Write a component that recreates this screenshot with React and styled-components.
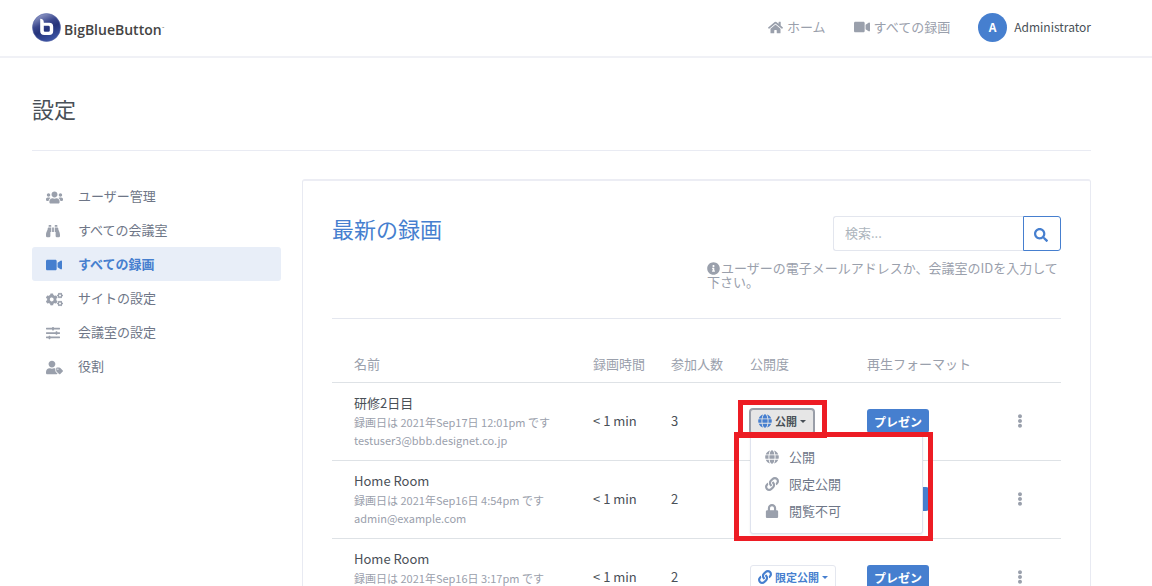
import React from "react";
import styled, { createGlobalStyle } from "styled-components";
import {
  FaHome,
  FaVideo,
  FaUsers,
  FaBinoculars,
  FaCogs,
  FaSlidersH,
  FaUserTag,
  FaInfoCircle,
  FaSearch,
  FaGlobe,
  FaLink,
  FaLock,
  FaEllipsisV,
} from "react-icons/fa";

const GlobalStyle = createGlobalStyle`
  * {
    box-sizing: border-box;
  }
  body {
    margin: 0;
    background-color: #fff;
    color: #495057;
    font-family: "Noto Sans CJK JP", "Noto Sans", sans-serif;
    font-size: 13px;
    line-height: 20px;
  }
  h1, h2, p {
    margin: 0;
    font-weight: 400;
  }
  a {
    color: inherit;
    text-decoration: none;
  }
  button, input {
    font-family: inherit;
    font-size: inherit;
  }
`;

const Header = styled.header`
  display: flex;
  align-items: center;
  justify-content: space-between;
  height: 58px;
  padding: 0 61px 2px 32px;
  border-bottom: 2px solid #f0f1f6;
`;
const Brand = styled.a`
  display: flex;
  align-items: center;
  gap: 3px;
`;
const BrandName = styled.span`
  font-family: "Open Sans", "Noto Sans", sans-serif;
  font-size: 14px;
  font-weight: 600;
  color: #444;
  padding-top: 5px;
`;
const TradeMark = styled.sup`
  font-size: 3px;
  line-height: 1;
`;
const Nav = styled.nav`
  display: flex;
  align-items: center;
`;
const NavLink = styled.a`
  display: flex;
  align-items: center;
  gap: 4px;
  margin-right: 28px;
  color: #9aa0ac;
`;
const UserLink = styled.a`
  display: flex;
  align-items: center;
  gap: 7px;
  font-size: 12px;
`;
const Avatar = styled.span`
  width: 29px;
  height: 29px;
  border-radius: 50%;
  background-color: #467fcf;
  color: #fff;
  font-weight: 700;
  line-height: 28px;
  text-align: center;
`;

const Page = styled.main`
  padding: 0 61px 0 32px;
`;
const PageTitle = styled.h1`
  font-size: 22px;
  line-height: 28px;
  padding: 36px 0 28px;
  border-bottom: 1px solid #e9ebf3;
`;
const Columns = styled.div`
  display: grid;
  grid-template-columns: 249px 1fr;
  gap: 21px;
  align-items: start;
  margin-top: 28px;
`;
const Menu = styled.nav`
  display: flex;
  flex-direction: column;
`;
const MenuLink = styled.a`
  display: flex;
  align-items: center;
  height: 34px;
  padding: 0 14px;
  border-radius: 3px;
  color: ${(props) => (props.$active ? "#467fcf" : "#6e7687")};
  background-color: ${(props) => (props.$active ? "#e8eef8" : "transparent")};
  font-weight: ${(props) => (props.$active ? 700 : 400)};
`;
const MenuIcon = styled.span`
  display: flex;
  width: 32px;
  padding-top: 2px;
  color: ${(props) => (props.$active ? "#467fcf" : "#9aa0ac")};
`;

const Card = styled.section`
  border: 1px solid #e8eaf2;
  border-top: 2px solid #ecedf4;
  border-radius: 3px;
  padding: 35px 29px 0;
`;
const CardHead = styled.div`
  display: flex;
  justify-content: space-between;
  padding-bottom: 29px;
  border-bottom: 1px solid #e4e7ef;
`;
const CardTitle = styled.h2`
  font-size: 22px;
  line-height: 24px;
  color: #467fcf;
`;
const SearchArea = styled.div`
  display: flex;
  flex-direction: column;
  width: 354px;
`;
const SearchForm = styled.form`
  display: flex;
  align-self: flex-end;
  width: 228px;
  height: 35px;
`;
const SearchInput = styled.input`
  flex: 1;
  min-width: 0;
  padding: 0 11px 2px;
  border: 1px solid #e3e6ee;
  border-right: 0;
  border-radius: 3px 0 0 3px;
  color: #495057;

  &::placeholder {
    color: #adb5bd;
  }
`;
const SearchButton = styled.button`
  display: flex;
  align-items: center;
  justify-content: center;
  width: 38px;
  padding: 2px 2px 0 0;
  border: 1px solid #467fcf;
  border-radius: 0 3px 3px 0;
  background-color: #fff;
  color: #467fcf;
  font-size: 14px;
`;
const SearchHint = styled.p`
  margin-top: 10px;
  line-height: 14px;
  color: #9aa0ac;

  svg {
    vertical-align: -2px;
    margin-right: 1px;
  }
`;

const Table = styled.table`
  width: 100%;
  margin-top: 29px;
  border-collapse: collapse;
  table-layout: fixed;
`;
const Th = styled.th`
  width: ${(props) => props.$width};
  height: 34px;
  padding: 0 0 2px ${(props) => (props.$first ? "22px" : "0")};
  border-bottom: 1px solid #dee2e6;
  text-align: left;
  font-weight: 400;
  color: #9aa0ac;
`;
const Td = styled.td`
  height: 78px;
  padding: 0 0 0 ${(props) => (props.$first ? "22px" : "0")};
  border-bottom: 1px solid #dee2e6;
  text-align: left;
  white-space: nowrap;
`;
const RecordingNote = styled.div`
  font-size: 11px;
  line-height: 18px;
  color: #9aa0ac;
`;

const Picker = styled.div`
  position: relative;
  display: flex;
`;
const PickerButton = styled.button`
  display: flex;
  align-items: center;
  gap: 3px;
  height: 25px;
  padding: 0 7px;
  border: 1px solid #e4e7ef;
  border-radius: 3px;
  background-color: #fff;
  color: #467fcf;
  font-size: 11px;
  font-weight: 700;

  svg {
    font-size: 14px;
    color: #467fcf;
  }

  &[aria-expanded="true"] {
    background-color: #e6e6e6;
    border-color: #999ea8;
    box-shadow: 0 0 0 1px #999ea8;
    color: #495057;
  }
`;
const Caret = styled.span`
  border: 3px solid transparent;
  border-top-color: currentColor;
  border-bottom: 0;
`;
const FormatButton = styled.button`
  height: 24px;
  padding: 0 7px;
  border: 0;
  border-radius: 3px;
  background-color: #467fcf;
  color: #fff;
  font-size: 12px;
  font-weight: 700;
`;
const MoreButton = styled.button`
  display: flex;
  padding: 0;
  border: 0;
  background: none;
  color: #9aa0ac;
  font-size: 14px;
`;

const Dropdown = styled.div`
  position: absolute;
  z-index: 1;
  top: 24px;
  left: 0;
  width: 173px;
  padding: 9px 0;
  border: 1px solid #dfe3ee;
  border-radius: 3px;
  background-color: #fff;
  box-shadow: 0 1px 2px rgba(0, 0, 0, 0.08);
`;
const DropdownItem = styled.button`
  display: flex;
  align-items: center;
  width: 100%;
  height: 27px;
  padding: 0 14px;
  border: 0;
  background: none;
  color: #6e7687;
`;
const DropdownIcon = styled.span`
  display: flex;
  width: 24px;
  padding-top: 2px;
  font-size: 14px;
  color: #9aa0ac;
`;
const Highlight = styled.div`
  position: absolute;
  z-index: 2;
  border: 5px solid #ed1c24;
  pointer-events: none;
`;
const ButtonHighlight = styled(Highlight)`
  top: -9px;
  left: -12px;
  width: 89px;
  height: 38px;
`;
const MenuHighlight = styled(Highlight)`
  top: 23px;
  left: -16px;
  width: 199px;
  height: 109px;
`;

const Logo = () => (
  <svg width="29" height="29" viewBox="0 0 29 29" aria-hidden="true">
    <defs>
      <linearGradient id="ball" x1="0.15" y1="0" x2="0.6" y2="1">
        <stop offset="0" stopColor="#a3abd2" />
        <stop offset="0.4" stopColor="#3a478d" />
        <stop offset="0.6" stopColor="#25337a" />
        <stop offset="1" stopColor="#3c55a5" />
      </linearGradient>
    </defs>
    <circle cx="14.5" cy="14.5" r="14" fill="url(#ball)" stroke="#5565a6" strokeWidth="0.6" />
    <path
      d="M8.2 5.8q3.6 0.2 3.6 3.6v0.4h5.4q4 0 4 4v4.2q0 4-4 4h-5q-4 0-4-4z M11.8 12.8v4.8q0 1.2 1.2 1.2h3.4q1.4 0 1.4-1.4v-3.2q0-1.4-1.4-1.4z"
      fill="#fff"
      fillRule="evenodd"
    />
  </svg>
);

const VisibilityPicker = ({ Icon, label, open }) => (
  <Picker>
    <PickerButton type="button" aria-haspopup="menu" aria-expanded={open}>
      <Icon />
      {label}
      <Caret />
    </PickerButton>
    {open && (
      <>
        <Dropdown role="menu">
          {Visibilities.map((item) => (
            <DropdownItem key={item.label} type="button" role="menuitem">
              <DropdownIcon>
                <item.Icon />
              </DropdownIcon>
              {item.label}
            </DropdownItem>
          ))}
        </Dropdown>
        <ButtonHighlight />
        <MenuHighlight />
      </>
    )}
  </Picker>
);

const RecordingRow = ({ name, date, owner, length, users, visibility, open }) => (
  <tr>
    <Td $first>
      <div>{name}</div>
      <RecordingNote>録画日は {date} です</RecordingNote>
      <RecordingNote>{owner}</RecordingNote>
    </Td>
    <Td>{length}</Td>
    <Td>{users}</Td>
    <Td>
      <VisibilityPicker {...visibility} open={open} />
    </Td>
    <Td>
      <FormatButton type="button">プレゼン</FormatButton>
    </Td>
    <Td>
      <MoreButton type="button" aria-haspopup="menu" aria-label="メニュー">
        <FaEllipsisV />
      </MoreButton>
    </Td>
  </tr>
);

const App = () => {
  return (
    <>
      <GlobalStyle />
      <Header>
        <Brand href="#">
          <Logo />
          <BrandName>
            BigBlueButton<TradeMark>™</TradeMark>
          </BrandName>
        </Brand>
        <Nav>
          <NavLink href="#">
            <FaHome size={15} />
            ホーム
          </NavLink>
          <NavLink href="#">
            <FaVideo size={16} />
            すべての録画
          </NavLink>
          <UserLink href="#">
            <Avatar>A</Avatar>
            Administrator
          </UserLink>
        </Nav>
      </Header>
      <Page>
        <PageTitle>設定</PageTitle>
        <Columns>
          <Menu>
            {MenuItems.map(({ Icon, size, label, active }) => (
              <MenuLink key={label} href="#" $active={active}>
                <MenuIcon $active={active}>
                  <Icon size={size} />
                </MenuIcon>
                {label}
              </MenuLink>
            ))}
          </Menu>
          <Card>
            <CardHead>
              <CardTitle>最新の録画</CardTitle>
              <SearchArea>
                <SearchForm>
                  <SearchInput type="text" placeholder="検索..." aria-label="検索" />
                  <SearchButton type="button" aria-label="検索">
                    <FaSearch />
                  </SearchButton>
                </SearchForm>
                <SearchHint>
                  <FaInfoCircle />
                  ユーザーの電子メールアドレスか、会議室のIDを入力して下さい。
                </SearchHint>
              </SearchArea>
            </CardHead>
            <Table>
              <thead>
                <tr>
                  {TableColumns.map(({ label, width }, index) => (
                    <Th key={index} $width={width} $first={index === 0}>
                      {label}
                    </Th>
                  ))}
                </tr>
              </thead>
              <tbody>
                {Recordings.map((recording, index) => (
                  <RecordingRow key={index} {...recording} />
                ))}
              </tbody>
            </Table>
          </Card>
        </Columns>
      </Page>
    </>
  );
};

// wide glyphs get a larger box so that they all look equally tall
const MenuItems = [
  { Icon: FaUsers, size: 17, label: "ユーザー管理" },
  { Icon: FaBinoculars, size: 14, label: "すべての会議室" },
  { Icon: FaVideo, size: 16, label: "すべての録画", active: true },
  { Icon: FaCogs, size: 17, label: "サイトの設定" },
  { Icon: FaSlidersH, size: 14, label: "会議室の設定" },
  { Icon: FaUserTag, size: 17, label: "役割" },
];

const Visibilities = [
  { Icon: FaGlobe, label: "公開" },
  { Icon: FaLink, label: "限定公開" },
  { Icon: FaLock, label: "閲覧不可" },
];

const TableColumns = [
  { label: "名前", width: "auto" },
  { label: "録画時間", width: "78px" },
  { label: "参加人数", width: "79px" },
  { label: "公開度", width: "117px" },
  { label: "再生フォーマット", width: "146px" },
  { label: "", width: "48px" },
];

const Recordings = [
  {
    name: "研修2日目",
    date: "2021年Sep17日 12:01pm",
    owner: "testuser3@bbb.designet.co.jp",
    length: "< 1 min",
    users: "3",
    visibility: Visibilities[0],
    open: true,
  },
  {
    name: "Home Room",
    date: "2021年Sep16日 4:54pm",
    owner: "admin@example.com",
    length: "< 1 min",
    users: "2",
    visibility: Visibilities[1],
    open: false,
  },
  {
    name: "Home Room",
    date: "2021年Sep16日 3:17pm",
    owner: "admin@example.com",
    length: "< 1 min",
    users: "2",
    visibility: Visibilities[1],
    open: false,
  },
];

export default App;
